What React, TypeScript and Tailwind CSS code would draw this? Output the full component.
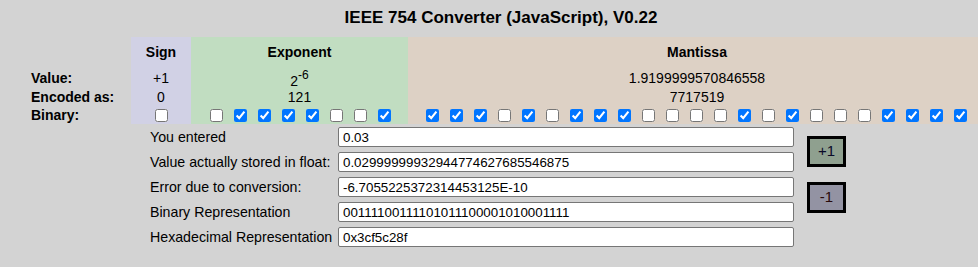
import React from 'react';

const expBits = [0, 1, 1, 1, 1, 0, 0, 1];
const manBits = [1, 1, 1, 0, 1, 0, 1, 1, 1, 0, 0, 0, 0, 1, 0, 1, 0, 0, 0, 1, 1, 1, 1];

const fields = [
  { label: 'You entered', value: '0.03' },
  { label: 'Value actually stored in float:', value: '0.02999999932944774627685546875' },
  { label: 'Error due to conversion:', value: '-6.7055225372314453125E-10' },
  { label: 'Binary Representation', value: '00111100111101011100001010001111' },
  { label: 'Hexadecimal Representation', value: '0x3cf5c28f' },
];

function Bit({ on }: { on: boolean }) {
  return (
    <div className="w-[24px] flex justify-center">
      <input type="checkbox" checked={on} readOnly className="m-0 w-[13px] h-[13px]" />
    </div>
  );
}

export default function App() {
  return (
    <div className="w-[978px] h-[267px] overflow-hidden bg-[#d3d3d3] text-black font-['Liberation_Sans',Arial,sans-serif]">
      {/* Title */}
      <div className="h-[35px] flex items-center justify-center pl-[24px] text-[17px] font-bold">
        IEEE 754 Converter (JavaScript), V0.22
      </div>

      {/* Bit table */}
      <div className="mt-[2px] flex w-[986px] text-[14px]">
        <div className="w-[131px] shrink-0 font-bold pl-[31px]">
          <div className="h-[31px]" />
          <div className="h-[20px] flex items-center">Value:</div>
          <div className="h-[18px] flex items-center">Encoded as:</div>
          <div className="h-[18px] flex items-center">Binary:</div>
        </div>

        <div className="w-[60px] shrink-0 bg-[#d1d1e5] text-center">
          <div className="h-[31px] flex items-center justify-center font-bold">Sign</div>
          <div className="h-[20px] flex items-center justify-center">+1</div>
          <div className="h-[18px] flex items-center justify-center">0</div>
          <div className="h-[18px] flex items-center justify-center">
            <input type="checkbox" checked={false} readOnly className="m-0 w-[13px] h-[13px]" />
          </div>
        </div>

        <div className="w-[217px] shrink-0 bg-[#c1ddc1]">
          <div className="h-[31px] flex items-center justify-center font-bold">Exponent</div>
          <div className="h-[20px] flex items-center justify-center">
            <span className="relative top-[3px]">
              2<span className="relative -top-[7px] text-[12px]">-6</span>
            </span>
          </div>
          <div className="h-[18px] flex items-center justify-center">121</div>
          <div className="h-[18px] flex items-center pl-[13px]">
            {expBits.map((b, i) => (
              <Bit key={i} on={b === 1} />
            ))}
          </div>
        </div>

        <div className="w-[578px] shrink-0 bg-[#ddd1c5]">
          <div className="h-[31px] flex items-center justify-center font-bold">Mantissa</div>
          <div className="h-[20px] flex items-center justify-center">1.9199999570846558</div>
          <div className="h-[18px] flex items-center justify-center">7717519</div>
          <div className="h-[18px] flex items-center pl-[12px]">
            {manBits.map((b, i) => (
              <Bit key={i} on={b === 1} />
            ))}
          </div>
        </div>
      </div>

      {/* Conversion results */}
      <div className="flex pl-[150px] pt-[3px]">
        <div className="flex flex-col gap-[5px]">
          {fields.map((f) => (
            <div key={f.label} className="flex items-center h-[20px]">
              <div className="w-[188px] text-[14.2px] relative top-[1px]">{f.label}</div>
              <input
                type="text"
                value={f.value}
                readOnly
                className="w-[456px] h-[20px] bg-white border border-[#767676] rounded-[2px] pl-[4px] text-[13.333px] text-black outline-none"
              />
            </div>
          ))}
        </div>
        <div className="ml-[13px] pt-[9px] flex flex-col gap-[15px]">
          <button className="w-[39px] h-[31px] border-[3px] border-black bg-[#8fa08f] text-[15px] text-[#0a0a28] flex items-center justify-center">
            +1
          </button>
          <button className="w-[39px] h-[31px] border-[3px] border-black bg-[#9393a3] text-[15px] text-[#280a0a] flex items-center justify-center">
            -1
          </button>
        </div>
      </div>
    </div>
  );
}
